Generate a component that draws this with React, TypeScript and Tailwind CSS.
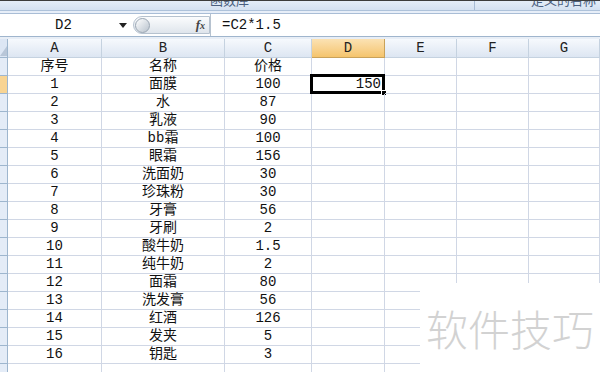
const columns = [
  { key: "A", width: "w-[94px]" },
  { key: "B", width: "w-[123px]" },
  { key: "C", width: "w-[87px]" },
  { key: "D", width: "w-[73px]" },
  { key: "E", width: "w-[72px]" },
  { key: "F", width: "w-[72px]" },
  { key: "G", width: "w-[71px]" },
];

const rows: [string, string, string][] = [
  ["序号", "名称", "价格"],
  ["1", "面膜", "100"],
  ["2", "水", "87"],
  ["3", "乳液", "90"],
  ["4", "bb霜", "100"],
  ["5", "眼霜", "156"],
  ["6", "洗面奶", "30"],
  ["7", "珍珠粉", "30"],
  ["8", "牙膏", "56"],
  ["9", "牙刷", "2"],
  ["10", "酸牛奶", "1.5"],
  ["11", "纯牛奶", "2"],
  ["12", "面霜", "80"],
  ["13", "洗发膏", "56"],
  ["14", "红酒", "126"],
  ["15", "发夹", "5"],
  ["16", "钥匙", "3"],
  ["", "", ""],
];

const font = "font-['Liberation_Mono','Noto_Sans_CJK_SC',monospace]";

function Ribbon() {
  return (
    <div className="relative h-[9px] overflow-hidden bg-gradient-to-b from-[#e4edf8] to-[#d4e1f1]">
      <div className="flex h-full">
        <span className="ml-[210px] -mt-[8px] text-[13px] leading-[14px] text-[#4a5f80] font-['Noto_Sans_CJK_SC',sans-serif]">
          函数库
        </span>
        <span className="ml-[225px] h-full w-px bg-[#a8bcd5]" />
        <span className="ml-[56px] -mt-[8px] text-[13px] leading-[14px] text-[#4a5f80] font-['Noto_Sans_CJK_SC',sans-serif]">
          定义的名称
        </span>
      </div>
    </div>
  );
}

function FormulaBar() {
  return (
    <div className="flex h-[22px] bg-white">
      <div className={`flex w-[133px] items-center ${font} text-[14px] text-[#111]`}>
        <span className="flex-1 pl-[8px] text-center">D2</span>
        <svg width="8" height="5" viewBox="0 0 8 5" className="mr-[6px]">
          <path d="M0 0h8L4 5z" fill="#222" />
        </svg>
      </div>
      <div className="my-[2px] flex w-[77px] items-center rounded-l-full border border-[#b6c2cf] bg-gradient-to-b from-[#fbfcfd] to-[#dfe5ec]">
        <span className="ml-[1px] h-[15px] w-[15px] rounded-full border border-[#9aa6b3] bg-gradient-to-br from-[#ffffff] to-[#b9c3ce]" />
        <span className="ml-auto mr-[4px] font-['Liberation_Serif',serif] text-[13px] italic font-bold text-[#444]">
          f<span className="text-[10px]">x</span>
        </span>
      </div>
      <div className={`flex flex-1 items-center border-l border-[#b6c2cf] pl-[11px] ${font} text-[14px] text-[#111]`}>
        =C2*1.5
      </div>
    </div>
  );
}

function HeaderRow() {
  return (
    <div className="flex h-[19px]">
      <div className="relative w-[8px] border-r border-b border-[#9eb6ce] bg-[#dce6f4]">
        <svg width="7" height="10" viewBox="0 0 7 10" className="absolute bottom-[1px] right-0">
          <path d="M7 0v10H0z" fill="#b8c6d8" />
        </svg>
      </div>
      {columns.map((c) => (
        <div
          key={c.key}
          className={`${c.width} flex items-center justify-center border-r border-b ${
            c.key === "D"
              ? "border-[#c9a25a] bg-gradient-to-b from-[#fbe2b3] to-[#f5c46c]"
              : "border-[#c5d2e0] bg-gradient-to-b from-[#f6f9fd] to-[#dde6f2]"
          } ${font} text-[14px] leading-[18px] text-[#222]`}
        >
          {c.key}
        </div>
      ))}
    </div>
  );
}

function DataRow({ cells, index }: { cells: [string, string, string]; index: number }) {
  const active = index === 1;
  return (
    <div className="flex h-[18px]">
      <div
        className={`w-[8px] border-r border-b border-[#9eb6ce] ${
          active ? "bg-[#f8d493]" : "bg-[#e4ecf7]"
        }`}
      />
      {columns.map((c, ci) => (
        <div
          key={c.key}
          className={`${c.width} relative flex items-center justify-center border-r border-b border-[#d0d7e5] ${font} text-[14px] leading-[17px] text-[#111]`}
        >
          {ci < 3 && cells[ci]}
          {active && c.key === "D" && (
            <>
              <span className="absolute right-[3px]">150</span>
              <span className="absolute -top-[2px] -left-[2px] -right-[1px] -bottom-[1px] border-[3px] border-black" />
              <span className="absolute -bottom-[3px] -right-[3px] h-[6px] w-[6px] border border-white bg-black" />
            </>
          )}
        </div>
      ))}
    </div>
  );
}

export default function App() {
  return (
    <div className="relative h-[372px] w-[600px] overflow-hidden bg-white">
      <div className="h-[1px] bg-[#3c3c3c]" />
      <Ribbon />
      <div className="h-px bg-[#aec2da]" />
      <div className="h-[2px] bg-[#e7eef8]" />
      <div className="h-px bg-[#a9bdd6]" />
      <FormulaBar />
      <div className="h-px bg-[#9fb5cd]" />
      <div className="h-[2px] bg-[#e8eef6]" />
      <HeaderRow />
      {rows.map((r, i) => (
        <DataRow key={i} cells={r} index={i} />
      ))}
      <div className="absolute left-[420px] top-[283px] flex h-[89px] w-[180px] items-center justify-center bg-white">
        <span className="font-['Noto_Sans_CJK_SC',sans-serif] text-[42px] font-light leading-none tracking-[0px] text-[#d2d2d2]">
          软件技巧
        </span>
      </div>
    </div>
  );
}
